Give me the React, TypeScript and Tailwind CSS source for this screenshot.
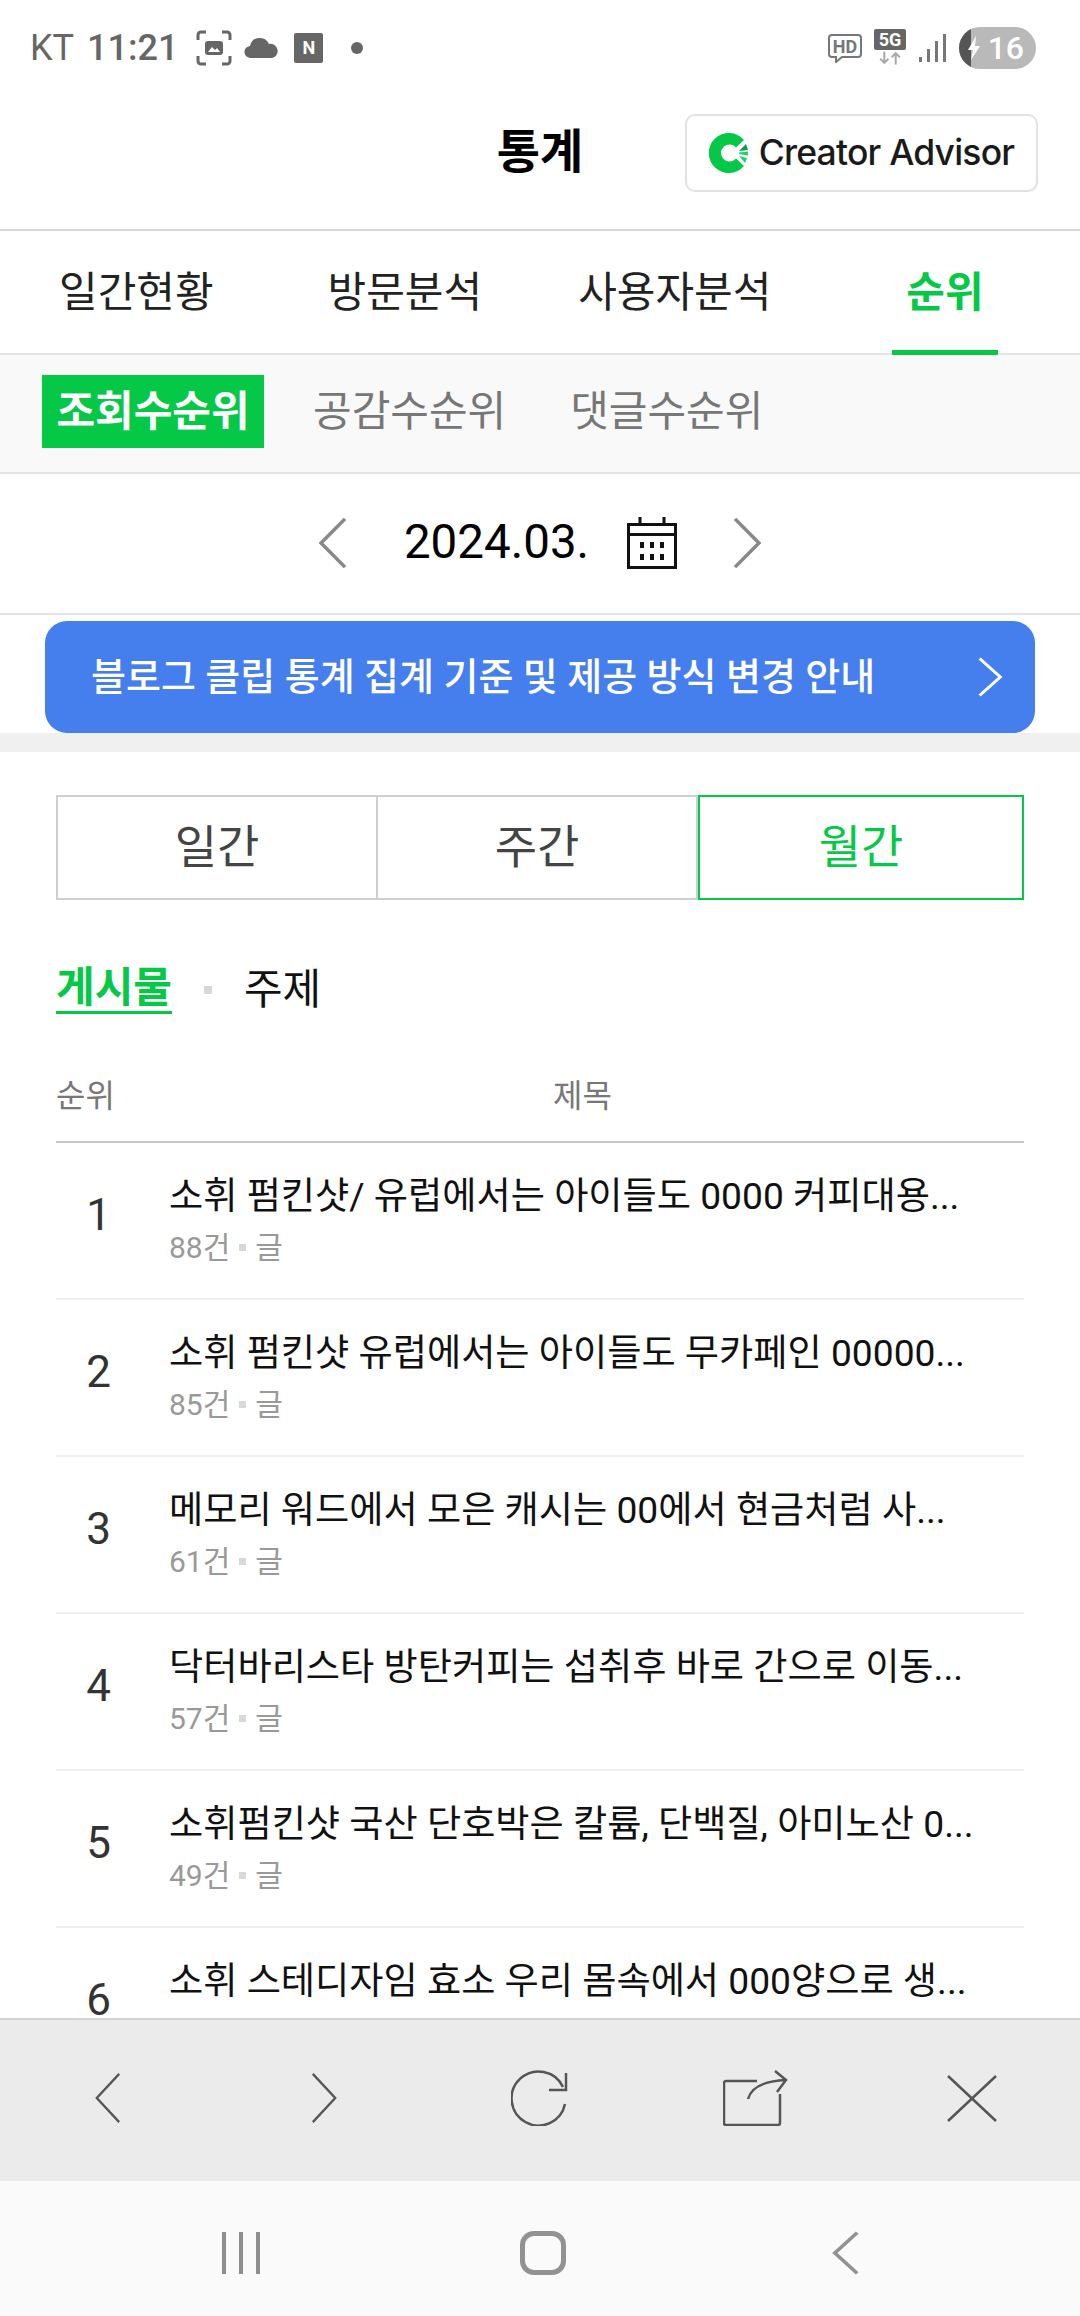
const font = "font-['Roboto','Noto_Sans_CJK_KR',sans-serif]";

const rows = [
  { rank: 1, title: '소휘 펌킨샷/ 유럽에서는 아이들도 0000 커피대용...', count: '88건' },
  { rank: 2, title: '소휘 펌킨샷 유럽에서는 아이들도 무카페인 00000...', count: '85건' },
  { rank: 3, title: '메모리 워드에서 모은 캐시는 00에서 현금처럼 사...', count: '61건' },
  { rank: 4, title: '닥터바리스타 방탄커피는 섭취후 바로 간으로 이동...', count: '57건' },
  { rank: 5, title: '소휘펌킨샷 국산 단호박은 칼륨, 단백질, 아미노산 0...', count: '49건' },
  { rank: 6, title: '소휘 스테디자임 효소 우리 몸속에서 000양으로 생...', count: '45건' },
];

const Chevron = ({ dir, className, stroke, width = 3 }: { dir: 'l' | 'r'; className: string; stroke: string; width?: number }) => (
  <svg viewBox="0 0 30 54" preserveAspectRatio="none" className={className} fill="none" stroke={stroke} strokeWidth={width}>
    <path d={dir === 'l' ? 'M27 2 L3 27 L27 52' : 'M3 2 L27 27 L3 52'} />
  </svg>
);

const StatusBar = () => (
  <div className="h-[76px] flex items-center justify-between pl-[30px] pr-[44px] pt-[20px] text-[#666]">
    <div className="flex items-center">
      <span className="text-[36px] leading-none">KT</span>
      <span className="ml-[13px] text-[36px] leading-none font-medium">11:21</span>
      <svg viewBox="0 0 36 36" className="ml-[18px] w-[36px] h-[36px]" fill="none" stroke="#666" strokeWidth="3">
        <path d="M2 10V5a3 3 0 0 1 3-3h5M26 2h5a3 3 0 0 1 3 3v5M34 26v5a3 3 0 0 1-3 3h-5M10 34H5a3 3 0 0 1-3-3v-5" />
        <rect x="9" y="11" width="18" height="14" rx="3" fill="#666" stroke="none" />
        <path d="M12 22l4-5 3 3 2-2 3 4z" fill="#fff" stroke="none" />
      </svg>
      <svg viewBox="0 0 36 24" className="ml-[11px] w-[36px] h-[24px]" fill="#666">
        <path d="M8 22a6 6 0 0 1-1-12 10 10 0 0 1 19-2 7 7 0 0 1 3 14z" />
      </svg>
      <div className="ml-[15px] w-[29px] h-[30px] bg-[#666] rounded-[2px] flex items-center justify-center text-white text-[18px] font-bold leading-none">N</div>
      <div className="ml-[28px] w-[12px] h-[12px] rounded-full bg-[#666]" />
    </div>
    <div className="flex items-center">
      <svg viewBox="0 0 36 30" className="w-[36px] h-[30px]" fill="none" stroke="#777" strokeWidth="2">
        <path d="M5 2h26a3 3 0 0 1 3 3v16a3 3 0 0 1-3 3H15l-6 5v-5H5a3 3 0 0 1-3-3V5a3 3 0 0 1 3-3z" />
        <text x="18" y="20" textAnchor="middle" fontSize="18" fontWeight="700" fill="#777" stroke="none">HD</text>
      </svg>
      <div className="ml-[11px] w-[32px] h-[38px] flex flex-col items-center">
        <div className="w-[32px] h-[21px] bg-[#666] rounded-[2px] text-white text-[18px] font-bold leading-[21px] text-center">5G</div>
        <svg viewBox="0 0 32 16" className="w-[26px] h-[16px]" fill="none" stroke="#aaa" strokeWidth="2.5">
          <path d="M9 0v14M4 9l5 5 5-5M23 16V2M18 7l5-5 5 5" />
        </svg>
      </div>
      <svg viewBox="0 0 28 30" className="ml-[13px] w-[28px] h-[30px]" fill="#777">
        <rect x="0" y="24" width="3" height="5" />
        <rect x="8" y="16" width="3" height="13" />
        <rect x="16" y="8" width="3" height="21" />
        <rect x="24" y="1" width="3" height="28" />
      </svg>
      <div className="relative ml-[12px] w-[77px] h-[42px] rounded-full bg-[#b9b9b9] overflow-hidden flex items-center justify-end pr-[12px]">
        <div className="absolute left-0 top-0 bottom-0 w-[12px] bg-[#555]" />
        <svg viewBox="0 0 14 24" className="absolute left-[8px] top-[9px] w-[14px] h-[24px]" fill="#fff">
          <path d="M9 0L1 14h5l-2 10 9-14H8z" />
        </svg>
        <span className="text-white text-[32px] leading-none font-medium">16</span>
      </div>
    </div>
  </div>
);

const Header = () => (
  <div className="h-[155px] border-b-2 border-[#d6d6d6] grid grid-cols-[1fr_auto_1fr] items-center pt-[1px]">
    <div />
    <h1 className="text-[47px] font-bold text-black leading-none mb-[4px]">통계</h1>
    <div className="flex justify-end pr-[42px]">
      <div className="w-[353px] h-[78px] border-2 border-[#e2e2e2] rounded-[10px] flex items-center justify-center">
        <svg viewBox="0 0 40 40" className="w-[40px] h-[40px] mr-[10px]">
          <path d="M35 7A20 20 0 1 0 35 33L27 25.500A8.500 8.500 0 1 1 27 14.500Z" fill="#05c846" />
          <path d="M30 18L37 11L39 17Z" fill="#0a9f45" />
          <path d="M30 19.500L39 18.500V22.500L30 21Z" fill="#19d36c" />
          <path d="M30 23L38 25L36 30Z" fill="#19d36c" />
        </svg>
        <span className="font-['Inter',sans-serif] text-[35.5px] font-medium text-[#1a1a1a] leading-none tracking-[-0.8px]">Creator Advisor</span>
      </div>
    </div>
  </div>
);

const Tabs = () => (
  <div className="h-[124px] border-b-2 border-[#e4e4e4] flex items-center text-[42px] text-[#222] relative">
    <span className="ml-[59px] whitespace-nowrap">일간현황</span>
    <span className="ml-[114px] whitespace-nowrap">방문분석</span>
    <span className="ml-[96px] whitespace-nowrap">사용자분석</span>
    <span className="ml-[135px] whitespace-nowrap font-bold text-[#05c846]">순위</span>
    <div className="absolute left-[892px] -bottom-[2px] w-[106px] h-[5px] bg-[#05c846]" />
  </div>
);

const SubTabs = () => (
  <div className="h-[119px] bg-[#f9f9f9] border-b-2 border-[#e4e4e4] flex items-center pl-[42px] text-[42px] text-[#777] pb-[4px]">
    <span className="w-[222px] h-[73px] bg-[#05c846] text-white font-bold flex items-center justify-center">조회수순위</span>
    <span className="ml-[49px]">공감수순위</span>
    <span className="ml-[64px]">댓글수순위</span>
  </div>
);

const DateRow = () => (
  <div className="h-[141px] border-b-2 border-[#e4e4e4] flex items-center justify-center pb-[2px]">
    <Chevron dir="l" stroke="#888" width={3.5} className="w-[30px] h-[52px]" />
    <span className="ml-[56px] text-[47.5px] text-black leading-none">2024.03.</span>
    <svg viewBox="0 0 50 52" className="ml-[38px] w-[50px] h-[52px]" fill="none" stroke="#111" strokeWidth="3">
      <path d="M1.500 7.500h47v43h-47zM1.500 17.500h47M13 0v8M37 0v8" />
      <path d="M15 25v6M25 25v6M35 25v6M15 37v6M25 37v6M35 37v6" strokeWidth="4" />
    </svg>
    <Chevron dir="r" stroke="#888" width={3.5} className="ml-[55px] w-[30px] h-[52px]" />
  </div>
);

const Banner = () => (
  <div className="pt-[6px] px-[45px] bg-white">
    <div className="h-[112px] bg-[#457eed] rounded-[22px] flex items-center justify-between pl-[46px] pr-[32px] text-white">
      <span className="text-[38px] font-medium leading-none whitespace-nowrap">블로그 클립 통계 집계 기준 및 제공 방식 변경 안내</span>
      <Chevron dir="r" stroke="#fff" width={3.5} className="w-[26px] h-[40px]" />
    </div>
  </div>
);

const Segments = () => (
  <div className="mx-[56px] mt-[43px] h-[105px] flex text-[46px] text-[#444]">
    <div className="w-[322px] border-2 border-[#cfcfcf] flex items-center justify-center">일간</div>
    <div className="w-[320px] border-y-2 border-r-2 border-[#cfcfcf] flex items-center justify-center">주간</div>
    <div className="flex-1 border-2 border-[#05c846] text-[#05c846] flex items-center justify-center">월간</div>
  </div>
);

const Row = ({ rank, title, count }: { rank: number; title: string; count: string }) => (
  <div className="h-[157px] border-b-2 border-[#f0f0f0] flex items-center">
    <div className="w-[113px] pr-[28px] text-center text-[44px] text-[#333] leading-none mt-[-12px]">{rank}</div>
    <div className="flex-1 min-w-0 -mt-[4px]">
      <div className="text-[37.2px] text-[#111] leading-[48px] whitespace-nowrap">{title}</div>
      <div className="mt-[10px] flex items-center text-[30px] text-[#999] leading-[36px]">
        <span>{count}</span>
        <span className="mx-[9px] w-[7px] h-[7px] bg-[#d8d8d8]" />
        <span>글</span>
      </div>
    </div>
  </div>
);

const Toolbar = () => (
  <div className="h-[163px] bg-[#ebebeb] border-t-2 border-[#d2d2d2] flex items-center pl-[94px] pb-[5px]">
    <Chevron dir="l" stroke="#555" width={2.5} className="w-[28px] h-[52px]" />
    <Chevron dir="r" stroke="#555" width={2.5} className="ml-[188px] w-[28px] h-[52px]" />
    <svg viewBox="0 0 57 56" className="ml-[173px] w-[57px] h-[56px]" fill="none" stroke="#555" strokeWidth="2.5">
      <path d="M54 34A27 27 0 1 1 52 17M55 3v17H38" />
    </svg>
    <svg viewBox="0 0 65 56" className="ml-[155px] w-[65px] h-[56px]" fill="none" stroke="#555" strokeWidth="2.5">
      <path d="M34 11H3a2 2 0 0 0-2 2v40a2 2 0 0 0 2 2h52a2 2 0 0 0 2-2V24M25 29C28 18 40 11 63 10M52 1l11 9-9 12" />
    </svg>
    <svg viewBox="0 0 50 47" className="ml-[159px] w-[50px] h-[47px]" fill="none" stroke="#555" strokeWidth="2.5">
      <path d="M1 1l48 45M49 1L1 46" />
    </svg>
  </div>
);

const NavBar = () => (
  <div className="h-[135px] bg-[#fafafa] flex items-center pt-[8px]">
    <div className="ml-[222px] w-[38px] h-[42px] flex justify-between">
      <div className="w-[4px] bg-[#8e8e8e]" />
      <div className="w-[4px] bg-[#8e8e8e]" />
      <div className="w-[4px] bg-[#8e8e8e]" />
    </div>
    <div className="ml-[260px] w-[46px] h-[44px] border-[5px] border-[#929292] rounded-[14px]" />
    <Chevron dir="l" stroke="#929292" width={4} className="ml-[266px] w-[28px] h-[44px]" />
  </div>
);

export default function App() {
  return (
    <div className={`${font} w-[1080px] h-[2316px] bg-white flex flex-col overflow-hidden`}>
      <StatusBar />
      <Header />
      <div className="flex-1 min-h-0 overflow-hidden">
        <Tabs />
        <SubTabs />
        <DateRow />
        <Banner />
        <div className="h-[19px] bg-[#f0f0f0]" />
        <Segments />
        <div className="mx-[56px] mt-[65px] flex items-center">
          <span className="text-[42px] font-bold text-[#05c846] leading-[46px] border-b-[3px] border-[#05c846]">게시물</span>
          <span className="ml-[32px] w-[8px] h-[8px] bg-[#d8d8d8]" />
          <span className="ml-[32px] text-[42px] text-[#111] leading-[46px]">주제</span>
        </div>
        <div className="mx-[56px] mt-[60px] h-[69px] border-b-2 border-[#c8c8c8] flex text-[32px] text-[#777] leading-[44px]">
          <span className="w-[497px]">순위</span>
          <span>제목</span>
        </div>
        <div className="mx-[56px]">
          {rows.map((r) => (
            <Row key={r.rank} {...r} />
          ))}
        </div>
      </div>
      <Toolbar />
      <NavBar />
    </div>
  );
}
